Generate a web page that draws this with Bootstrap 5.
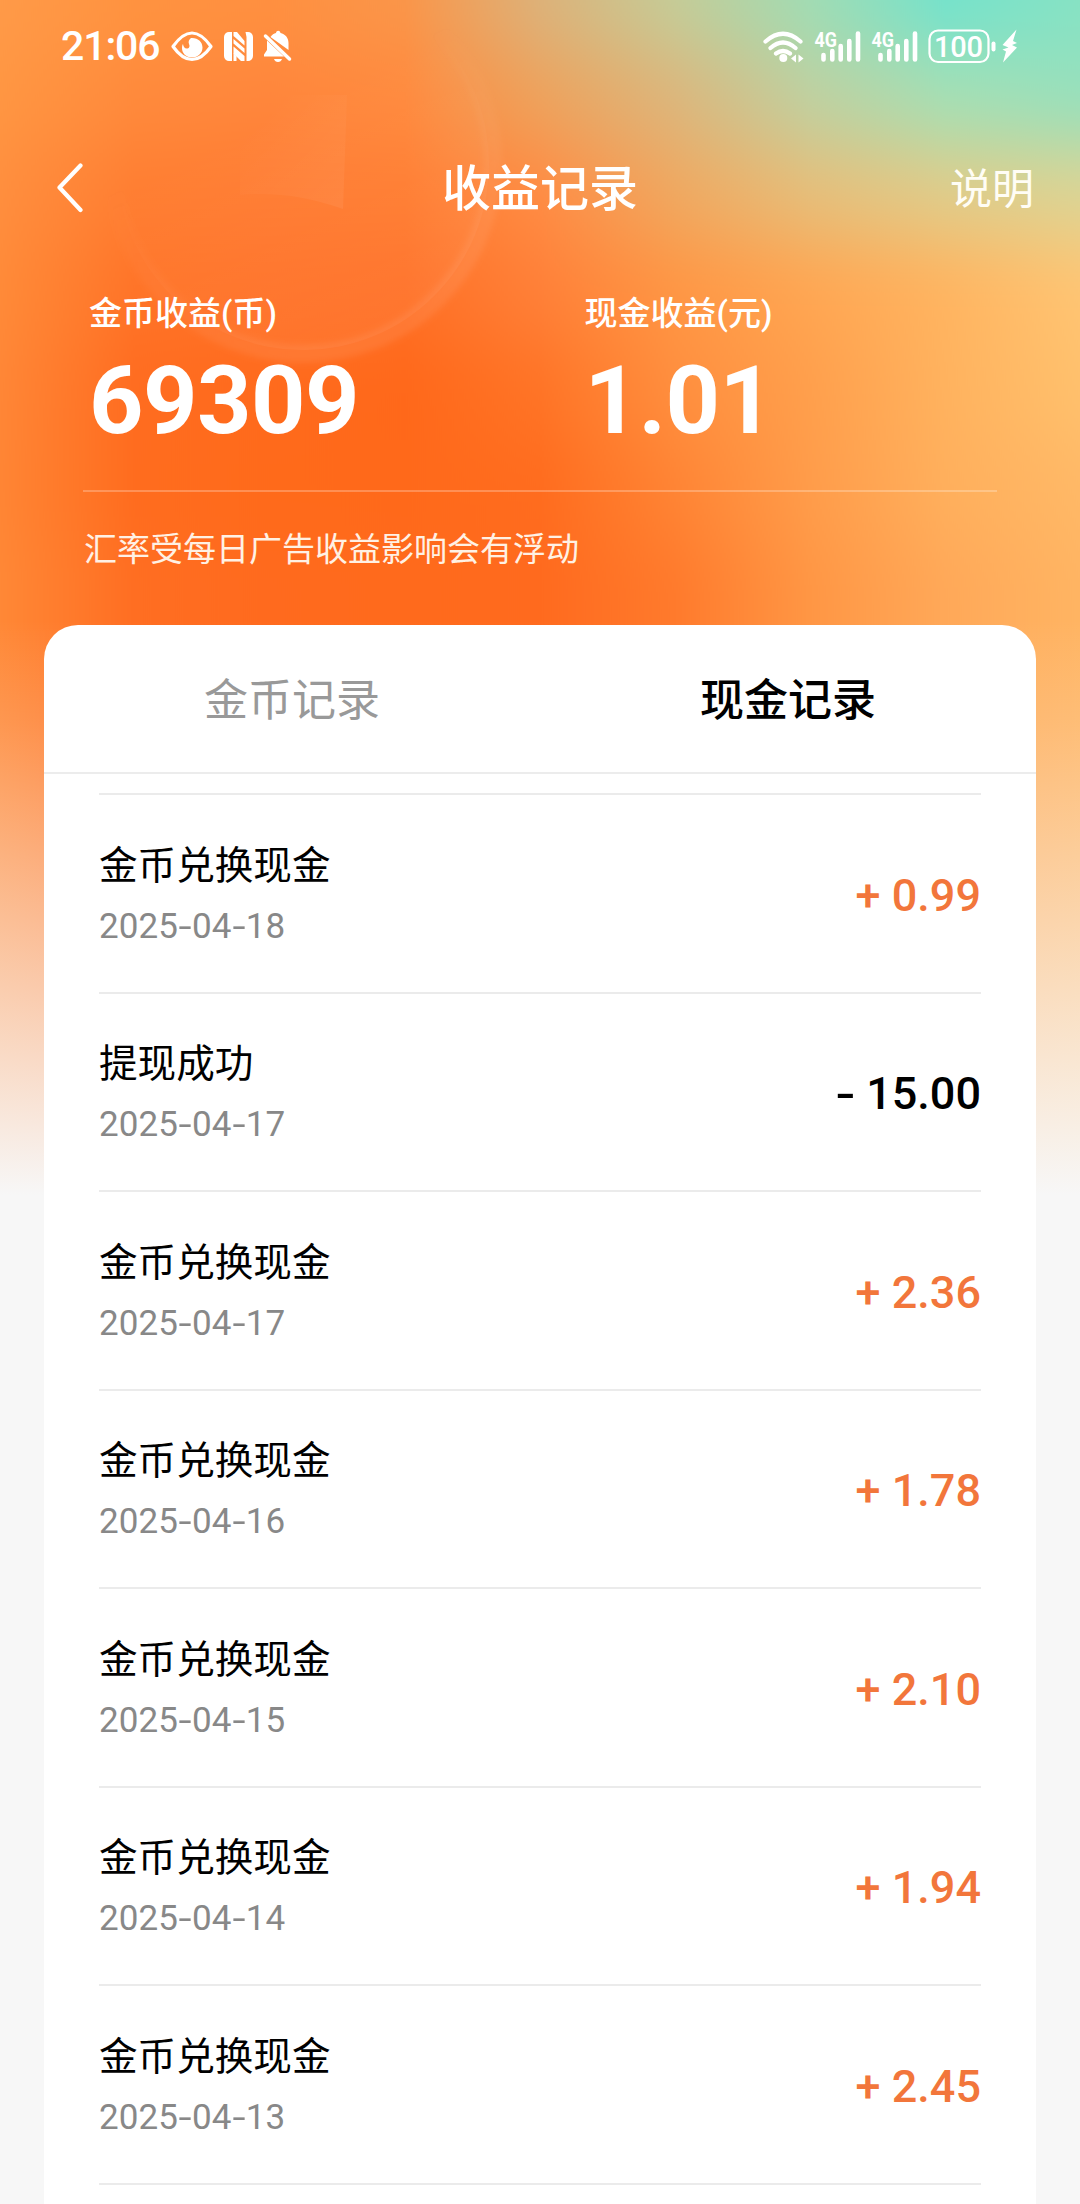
<!DOCTYPE html>
<html lang="zh-CN">
<head>
<meta charset="utf-8">
<meta name="viewport" content="width=device-width, initial-scale=1">
<title>收益记录</title>
<link rel="stylesheet" href="https://cdn.jsdelivr.net/npm/bootstrap@5.3.0/dist/css/bootstrap.min.css">
<style>
body{background:#f7f7f7;font-family:Roboto,"Noto Sans CJK SC",sans-serif;color:#000}
.screen{width:1080px;height:2204px}
.backdrop{z-index:0}
.front{z-index:1}
.statusbar{height:92px;padding:0 61px 0 61px}
.clock{font-size:41px;line-height:92px;letter-spacing:-1.1px;margin-right:10px;font-weight:500}
.topbar{height:100px;margin-top:46px;padding:0 46px 0 46px}
.side{width:120px;padding-left:10px}
.page-title{font-size:49px;line-height:100px;font-weight:500;padding-top:3px}
.help-link{font-size:42px;line-height:100px;color:#fffdf5;padding-top:3px}
.summary{padding:0 84px;margin-top:48px}
.sum-col{width:500.5px;padding-left:5px}
.sum-label{font-size:33px;line-height:50px;font-weight:500;margin-top:3px}
.sum-value{font-size:95px;line-height:100px;font-weight:700;margin-top:12px;letter-spacing:-.5px}
.rule{height:2px;background:rgba(255,255,255,.25);margin:39px -1px 0}
.note{font-size:33px;line-height:50px;margin-top:33px;color:#fff1e4}
.records{margin:50px 44px 0;border-radius:34px 34px 0 0;height:1579px}
.tabs{height:149px;border-bottom:2px solid #ececec}
.tab-item{font-size:44px;line-height:152px;color:#999}
.tab-item.active{color:#000;font-weight:500}
.rows{padding:19px 55px 0}
.entry{height:198.5px;border-top:2px solid #ebebeb}
.entry-name{font-size:38.6px;line-height:56px}
.entry-date{font-size:35px;line-height:44px;color:#888;margin-top:11px;letter-spacing:.1px}
.entry-date i{font-style:normal;display:inline-block;width:14px;text-align:center;transform:scaleX(1.35)}
.amount{font-size:45px;line-height:60px;font-weight:500;color:#f2763b;padding-top:5px}
.amount.out{color:#000}
.sign{display:inline-block;transform-origin:right center}
.out .sign{transform:scaleX(1.3)}
</style>
<script src="https://cdn.jsdelivr.net/npm/bootstrap@5.3.0/dist/js/bootstrap.bundle.min.js"></script>
</head>
<body>
<div class="screen position-relative overflow-hidden">
  <svg class="backdrop position-absolute top-0 start-0" width="1080" height="1200" viewBox="0 0 1080 1200" aria-hidden="true">
    <defs>
      <filter id="soft" filterUnits="userSpaceOnUse" x="0" y="-200" width="1080" height="1700" color-interpolation-filters="sRGB"><feGaussianBlur stdDeviation="0 34"/></filter>
      <filter id="haze"><feGaussianBlur stdDeviation="3"/></filter>
      <linearGradient id="fade" gradientUnits="userSpaceOnUse" x1="0" y1="620" x2="0" y2="1195"><stop offset="0" stop-color="#f7f7f7" stop-opacity="0"/><stop offset=".18" stop-color="#f7f7f7" stop-opacity=".14"/><stop offset="1" stop-color="#f7f7f7"/></linearGradient>
      <linearGradient id="ring" x1="0" y1="0" x2=".5" y2="1"><stop offset=".45" stop-color="#fff" stop-opacity="0"/><stop offset="1" stop-color="#fff" stop-opacity=".08"/></linearGradient>
      <linearGradient id="wedge" x1="0" y1="0" x2="1" y2="1"><stop offset=".2" stop-color="#fff" stop-opacity="0"/><stop offset="1" stop-color="#fff" stop-opacity=".06"/></linearGradient>
    </defs>
    <g id="bands" filter="url(#soft)"></g>
    <circle cx="303" cy="164" r="190" fill="none" stroke="url(#ring)" stroke-width="18" filter="url(#haze)"/>
    <circle cx="303" cy="164" r="186" fill="url(#ring)" opacity=".6"/>
    <path d="M240 95H347L343 209Q290 190 240 195Z" fill="url(#wedge)"/>
    <rect y="600" width="1080" height="600" fill="url(#fade)"/>
  </svg>

  <div class="front position-relative">
    <header class="text-white">
      <div class="statusbar d-flex align-items-center justify-content-between">
        <div class="d-flex align-items-center">
          <span class="clock">21:06</span>
          <svg width="122" height="34" viewBox="169 28 122 34" fill="none">
            <path d="M172 45.500C178 37 184 32 191 32S204 37 210 45.500C204 54 198 58.500 191 58.500S178 54 172 45.500Z" stroke="#fff" stroke-width="3.200" stroke-linejoin="round"/>
            <path d="M190 37c7-.5 11.500 4 11.500 9.500s-4.500 10-10.500 10-10-4.300-10-9.500c0-1.500.3-3 1-4 .3 3 2 5 4.500 4.500 2-.4 2.500-2.500 1.500-4.500-1-2.500 0-4.500 2-6Z" fill="#fff"/>
            <path d="M231 31h-2.500a5 5 0 0 0-5.500 5v19a5 5 0 0 0 5.500 5h2.500ZM244.500 31h2a5 5 0 0 1 5.500 5v19a5 5 0 0 1-5.500 5H245.500V36Z" fill="#fff"/>
            <path d="M232.500 31H236l7.500 9v4.500l-11-9.500ZM232.500 38l11 9.500V52l-11-9.500ZM232.500 45.500l11 9.500v5H240l-7.500-7.500Z" fill="#fff"/>
            <path d="M232.500 52v8h3v-5Z" fill="#fff"/>
            <path d="M269.500 36c1.500-2.500 3.500-3.500 5.500-4 .4-3 4-3 4.500 0 4.500 1 8 4.500 8 10v7ZM266 39.500 283 55.500H263v-2l3-4.500Z" fill="#fff"/>
            <path d="m264.500 35 24 23" stroke="#fff" stroke-width="3.500" stroke-linecap="round"/>
            <path d="M273 58h8q-1 3-4 3t-4-3Z" fill="#fff"/>
          </svg>
        </div>
        <svg width="258" height="36" viewBox="761 27 258 36" fill="none">
          <g stroke="#fff" stroke-width="4.200" stroke-linecap="round">
            <path d="M765.500 40.500Q783 25 800.500 40.500M770.500 47Q783 36 795.500 47M776 52.500Q783 47.500 790 52.500"/>
          </g>
          <circle cx="783.300" cy="57" r="4" fill="#fff"/>
          <path d="m796 53.500-5 4 5 4ZM798.500 53.500l5 4-5 4Z" fill="#fff"/>
          <g>
            <text x="814.500" y="45.500" font-family="Roboto,sans-serif" font-size="20.500" font-weight="700" fill="#fff" textLength="22.500" lengthAdjust="spacingAndGlyphs">4G</text>
            <g stroke="#fff" stroke-width="4.600" stroke-linecap="round"><path d="M823.500 54v4.500M832.300 50v8.500M840.700 45v13.500M849.300 40v18.500M858 32.500v26"/></g>
          </g>
          <g>
            <text x="871.500" y="45.500" font-family="Roboto,sans-serif" font-size="20.500" font-weight="700" fill="#fff" textLength="22.500" lengthAdjust="spacingAndGlyphs">4G</text>
            <g stroke="#fff" stroke-width="4.600" stroke-linecap="round"><path d="M880.500 54v4.500M889.300 50v8.500M897.700 45v13.500M906.300 40v18.500M915 32.500v26"/></g>
          </g>
          <rect x="929.500" y="29.500" width="59" height="31.500" rx="8.500" stroke="#fff" stroke-width="2.200"/>
          <text x="934" y="55.700" font-family="Roboto,sans-serif" font-size="29" font-weight="500" fill="#fff" textLength="49">100</text>
          <rect x="991.500" y="40.500" width="4" height="10" rx="2" fill="#fff"/>
          <path d="m1016.500 28.500-14 15.500 6 2.500-6 2 3.500 2-3 11 14-15-5-2.500 5-2-4-2Z" fill="#fff"/>
        </svg>
      </div>
      <nav class="topbar d-flex align-items-center justify-content-between">
        <div class="side d-flex"><svg width="30" height="50" viewBox="0 0 30 50" fill="none"><path d="M24.500 2.500 3.500 24.500 24.500 47" stroke="#fff" stroke-width="4.200" stroke-linecap="round" stroke-linejoin="round"/></svg></div>
        <div class="page-title">收益记录</div>
        <div class="side help-link text-end">说明</div>
      </nav>
      <section class="summary">
        <div class="d-flex">
          <div class="sum-col"><div class="sum-label">金币收益(币)</div><div class="sum-value">69309</div></div>
          <div><div class="sum-label">现金收益(元)</div><div class="sum-value">1.01</div></div>
        </div>
        <div class="rule"></div>
        <div class="note">汇率受每日广告收益影响会有浮动</div>
      </section>
    </header>

    <main class="records bg-white">
      <div class="tabs d-flex text-center">
        <div class="tab-item flex-fill w-50">金币记录</div>
        <div class="tab-item active flex-fill w-50">现金记录</div>
      </div>
      <div class="rows" id="rows"></div>
    </main>
  </div>
</div>
<script>
// Backdrop colours, left to right, one list per horizontal band
const bands = [
  [-200, 250, 'ff9a48 ff9340 ff9040 fa964a dcb27a c4cc98 a0dcb4 74e2cc 86e2c4'],
  [50, 95, 'ff9642 ff8a3c ff863c ff8a3e eea25c dcb67c c0d0a0 a6dfb4 98e0bc'],
  [145, 95, 'ff8e3e ff7e32 ff7c32 ff7c30 ff8c44 f0a860 e6be7a e0cc8a dcd494'],
  [240, 100, 'ff8a38 ff7428 ff7228 ff7026 ff8038 ff9644 ffa652 ffb460 ffc472'],
  [340, 100, 'ff8636 ff6c20 ff6a1c ff681a ff7426 ff8e3e ff9f4c ffb25e ffc06c'],
  [440, 100, 'ff8534 ff6c1e ff6a1a ff691a ff6c1e ff8434 ff9c4a ffaf5c ffb866'],
  [540, 900, 'ff8836 ff6e22 ff6a1e ff6a1c ff6a1e ff7a2c ff9644 ffa858 ffb462']
];
document.getElementById('bands').innerHTML = bands.map(([y, h, list], i) => {
  const stops = list.split(' ').map((c, k) => `<stop offset="${k / 8}" stop-color="#${c}"/>`).join('');
  return `<linearGradient id="band${i}" x1="0" x2="1">${stops}</linearGradient><rect y="${y}" width="1080" height="${h}" fill="url(#band${i})"/>`;
}).join('');

const records = [
  ['金币兑换现金', '2025-04-18', '+ 0.99'],
  ['提现成功', '2025-04-17', '- 15.00'],
  ['金币兑换现金', '2025-04-17', '+ 2.36'],
  ['金币兑换现金', '2025-04-16', '+ 1.78'],
  ['金币兑换现金', '2025-04-15', '+ 2.10'],
  ['金币兑换现金', '2025-04-14', '+ 1.94'],
  ['金币兑换现金', '2025-04-13', '+ 2.45']
];
document.getElementById('rows').innerHTML = records.map(([name, date, sum]) => `
  <div class="entry d-flex align-items-center justify-content-between">
    <div><div class="entry-name">${name}</div><div class="entry-date">${date.replace(/-/g, '<i>-</i>')}</div></div>
    <div class="amount${sum[0] === '-' ? ' out' : ''}"><span class="sign">${sum[0]}</span>${sum.slice(1)}</div>
  </div>`).join('') + '<div class="entry"></div>';
</script>
</body>
</html>
